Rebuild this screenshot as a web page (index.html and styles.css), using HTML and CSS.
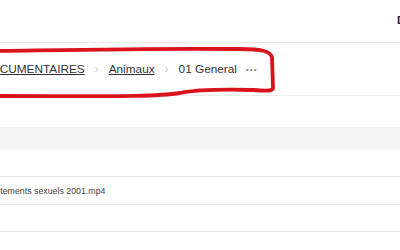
FILE: index.html
```html
<!DOCTYPE html>
<html lang="fr">
<head>
  <meta charset="UTF-8">
  <title>Fichiers</title>
  <link rel="stylesheet" href="styles.css">
</head>
<body>
<div class="page">
  <header class="entete">
    <div class="logo"></div>
    <div class="compte">Déconnexion</div>
  </header>

  <nav class="fil">
    <a href="#">DOCUMENTAIRES</a>
    <span class="sep">›</span>
    <a href="#">Animaux</a>
    <span class="sep">›</span>
    <span class="courant">01 General</span>
    <span class="plus">•••</span>
  </nav>

  <div class="liste">
    <div class="titres"></div>
    <div class="ligne"></div>
    <div class="ligne fichier">Comportements sexuels 2001.mp4</div>
    <div class="ligne"></div>
  </div>

  <svg class="entoure" width="300" height="70" viewBox="0 0 300 70">
    <path d="M0 11 C 70 10, 160 8, 245 9 C 266 9, 275 11, 277 17 L 278 48 C 278 51, 273 51, 258 50 C 220 49, 200 50, 185 53 C 160 57, 110 56, 0 56" />
  </svg>
</div>
</body>
</html>
```

FILE: styles.css
```css
html, body {
  margin: 0;
  overflow: hidden;
}
body {
  font-family: "Liberation Sans", Arial, sans-serif;
  background: #fff;
  color: #333;
}
.page {
  position: relative;
  width: 560px;
  margin-left: -40px;
}
.entete {
  display: grid;
  grid-template-columns: 437px auto;
  align-items: center;
  height: 42px;
  border-bottom: 1px solid #e9e9e9;
}
.compte {
  font-size: 11px;
  font-weight: bold;
  color: #222;
  margin-top: -2px;
}
.fil {
  display: flex;
  align-items: center;
  height: 52px;
  padding-left: 22px;
  font-size: 11.8px;
  border-bottom: 1px solid #ededed;
}
.fil a {
  color: #333;
  text-decoration: underline;
}
.sep {
  color: #ccc;
  font-size: 12px;
  margin: 0 10px;
}
.plus {
  font-size: 7px;
  letter-spacing: 1.6px;
  color: #777;
  margin-left: 9px;
}
.liste {
  margin-top: 31px;
}
.titres {
  height: 23px;
  background: #f4f4f4;
}
.ligne {
  height: 26px;
  border-bottom: 1px solid #e6e6e6;
  display: flex;
  align-items: center;
}
.ligne.fichier {
  height: 27px;
  padding-left: 9px;
  font-size: 8.8px;
  color: #444;
}
.entoure {
  position: absolute;
  left: 35px;
  top: 40px;
}
.entoure path {
  fill: none;
  stroke: #d9141c;
  stroke-width: 3.8;
  stroke-linecap: round;
  stroke-linejoin: round;
}
```
